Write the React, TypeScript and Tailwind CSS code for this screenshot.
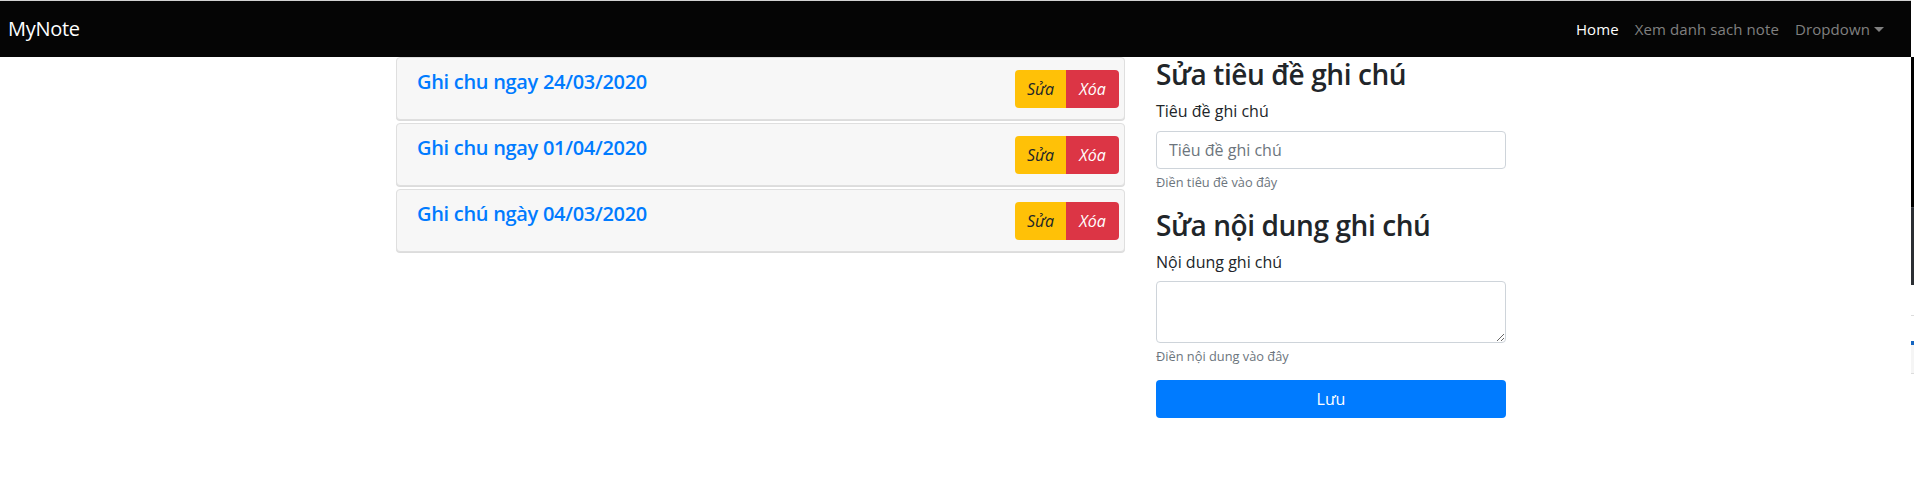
import React from "react";

const notes = ["Ghi chu ngay 24/03/2020", "Ghi chu ngay 01/04/2020", "Ghi chú ngày 04/03/2020"];

export default function App() {
  return (
    <div className="flex w-[1914px] h-[494px] bg-white overflow-hidden" style={{ fontFamily: '"Open Sans", "Noto Sans", sans-serif' }}>
      <div className="w-[1911px] flex flex-col">
        <div className="h-px bg-[#d2d2d2]" />
        <nav className="h-[56px] bg-[#050505] flex items-center justify-between pl-2 pr-[27px]">
          <span className="text-[20px] text-white leading-[30px] tracking-[-0.3px]">MyNote</span>
          <div className="flex items-center text-[15px] leading-6 tracking-[0.1px]">
            <span className="text-white px-2">Home</span>
            <span className="text-[#808080] px-2">Xem danh sach note</span>
            <span className="text-[#808080] pl-2 flex items-center">
              Dropdown
              <span className="ml-1 w-0 h-0 border-l-[5px] border-r-[5px] border-t-[5px] border-l-transparent border-r-transparent border-t-[#808080]" />
            </span>
          </div>
        </nav>
        <div className="flex pl-[396px] gap-[31px]">
          <div className="w-[729px] flex flex-col gap-[3px]">
            {notes.map((n) => (
              <div key={n} className="h-[63px] bg-[#f7f7f7] border border-[#dfdfdf] rounded-[4px] shadow-[0_1px_0_#dcdcdc] flex justify-between items-start pl-5 pr-[5px] pt-3">
                <h5 className="text-[20px] leading-6 font-semibold tracking-[-0.3px] text-[#007bff]">{n}</h5>
                <div className="flex h-[38px] rounded-[4px] overflow-hidden italic text-[16px]">
                  <button className="w-[51px] bg-[#ffc107] text-[#212529]">Sửa</button>
                  <button className="w-[53px] bg-[#dc3545] text-white">Xóa</button>
                </div>
              </div>
            ))}
          </div>
          <div className="w-[350px] flex flex-col text-[#212529]">
            <h3 className="text-[28px] leading-[34px] font-semibold tracking-[-0.4px]">Sửa tiêu đề ghi chú</h3>
            <label className="mt-2 text-[16px] leading-6">Tiêu đề ghi chú</label>
            <input
              className="mt-2 h-[38px] border border-[#ced4da] rounded-[4px] px-3 text-[16px] placeholder:text-[#6c757d] outline-none"
              placeholder="Tiêu đề ghi chú"
            />
            <small className="mt-1 text-[12.8px] leading-[19px] text-[#6c757d]">Điền tiêu đề vào đây</small>
            <h3 className="mt-4 text-[28px] leading-[34px] font-semibold tracking-[-0.4px]">Sửa nội dung ghi chú</h3>
            <label className="mt-2 text-[16px] leading-6">Nội dung ghi chú</label>
            <textarea className="mt-[7px] h-[62px] border border-[#ced4da] rounded-[4px] px-3 py-1.5 text-[16px] outline-none resize-y" />
            <small className="mt-1 text-[12.8px] leading-[18px] text-[#6c757d]">Điền nội dung vào đây</small>
            <button className="mt-[15px] h-[38px] bg-[#007bff] text-white text-[16px] rounded-[4px]">Lưu</button>
          </div>
        </div>
      </div>
      <div className="w-[3px] flex flex-col">
        <div className="h-[57px] bg-white" />
        <div className="h-[150px] bg-black" />
        <div className="h-[78px] bg-[#2b2e33] border-t border-[#44484e]" />
        <div className="h-[30px] bg-white" />
        <div className="h-px bg-[#dcdcdc]" />
        <div className="h-[25px] bg-white" />
        <div className="h-[4px] bg-[#1565c0]" />
        <div className="h-[29px] bg-[#f5f5f5] border-b border-[#dcdcdc]" />
        <div className="flex-1 bg-white" />
      </div>
    </div>
  );
}
